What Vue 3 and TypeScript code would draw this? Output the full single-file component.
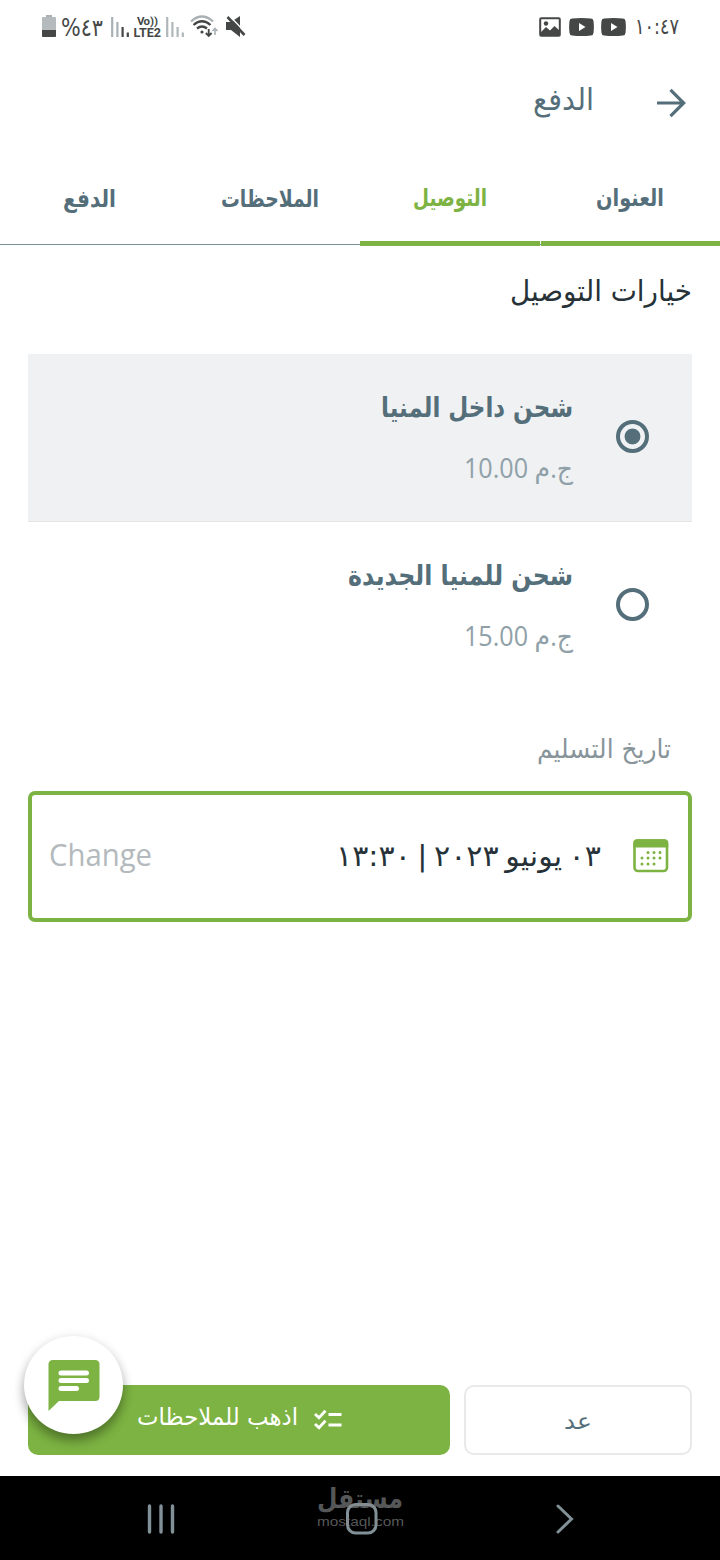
<script setup lang="ts">
import { h, ref } from 'vue'

interface FitProps {
  text: string
  w: number
  cap: number
  size: number
  ltr?: boolean
}

// A text run whose box spans exactly from the top of its letters to the baseline.
const FitText = (p: FitProps) =>
  h('svg', { class: 'fit', width: p.w, height: p.cap, direction: p.ltr ? 'ltr' : 'rtl' }, [
    h(
      'text',
      {
        x: p.ltr ? 0 : p.w,
        y: p.cap,
        'font-size': p.size,
        textLength: p.w,
        lengthAdjust: 'spacingAndGlyphs',
      },
      p.text,
    ),
  ])
FitText.props = { text: String, w: Number, cap: Number, size: Number, ltr: Boolean }

const tabs = [
  { text: 'العنوان', w: 68, state: 'done' },
  { text: 'التوصيل', w: 74, state: 'done current' },
  { text: 'الملاحظات', w: 98, state: 'low' },
  { text: 'الدفع', w: 53, state: 'low' },
]

const options = [
  { name: 'شحن داخل المنيا', w: 192, price: 'ج.م 10.00' },
  { name: 'شحن للمنيا الجديدة', w: 225, price: 'ج.م 15.00' },
]
const selected = ref(0)
</script>

<template>
  <div class="screen" dir="rtl">
    <div class="status" dir="ltr">
      <svg width="14" height="22" viewBox="42 15 14 22">
        <path d="M46 15h6v3h-6z" fill="#abb0b1" />
        <rect x="42" y="17" width="14" height="20" rx="1" fill="#b5babc" />
        <path d="M42 30h14v6a1 1 0 0 1-1 1H43a1 1 0 0 1-1-1z" fill="#454747" />
      </svg>
      <FitText class="pct" text="%٤٣" :w="42" :cap="22" :size="24" ltr />
      <svg class="sig" width="18" height="22" viewBox="111 16 18 22" stroke-width="2.2">
        <path d="M112.2 17v20M117.4 22v15" stroke="#a9b1b4" />
        <path d="M122.6 27v10M127.8 32.500v4.500" stroke="#454747" />
      </svg>
      <svg class="volte" width="28" height="22" viewBox="134 16 28 22" font-family="Roboto" font-weight="700" fill="#454747">
        <text x="137" y="25" font-size="11.500" textLength="13">Vo</text>
        <text x="150" y="25" font-size="11.500" textLength="8">))</text>
        <text x="133.500" y="37" font-size="12.500" textLength="27.500" lengthAdjust="spacingAndGlyphs">LTE2</text>
      </svg>
      <svg class="sig2" width="18" height="22" viewBox="166 16 18 22" stroke-width="2.2" stroke="#b0b7ba">
        <path d="M167.200 17v20M172.400 22v15M177.600 27v10M182.800 32.500v4.500" />
      </svg>
      <svg class="wifi" width="28" height="23" viewBox="190 15 28 23" fill="none" stroke="#454747" stroke-width="2.300">
        <path d="M191 21.500Q202 11.500 213 21.500" stroke="#a9b1b4" />
        <path d="M193.500 25Q202 17.500 210.500 25M197 28.500Q202 24.500 207 28.500" />
        <circle cx="202" cy="32" r="1.600" fill="#454747" stroke="none" />
        <path d="M208.700 29v7M205.800 33l2.900 3 2.900-3" stroke-width="1.800" />
        <path d="M215 35v-6.500M212.500 31l2.500-2.600 2.500 2.600" stroke="#a9b1b4" stroke-width="1.600" />
      </svg>
      <svg class="mute" width="21" height="23" viewBox="225 15 21 23">
        <path d="M226 22h5l9-6v21l-9-7h-5z" fill="#454747" />
        <path d="M229 15.500L246 33" stroke="#fff" stroke-width="1.500" />
        <path d="M227.500 17L244.500 35" stroke="#454747" stroke-width="2.600" />
      </svg>
      <svg class="pic" width="22" height="20" viewBox="539 17 22 20">
        <rect x="540.200" y="18.200" width="19.600" height="17.600" rx="1" fill="none" stroke="#454747" stroke-width="2" />
        <path d="M541 32l5-5 4 3.500 4.500-4.500 5 4.500v5h-18.500z" fill="#454747" />
        <circle cx="546" cy="23.500" r="2.200" fill="#454747" />
      </svg>
      <svg v-for="n in 2" :key="n" class="tube" width="25" height="18" viewBox="0 0 25 18">
        <path d="M3 .6Q12.500-.4 22 .6 24.400.8 24.600 3.500 25.200 9 24.600 14.500 24.400 17.200 22 17.400 12.500 18.400 3 17.400.6 17.200.4 14.500-.2 9 .4 3.500.6.800 3 .6z" fill="#454747" />
        <path d="M10 5l6.500 4-6.500 4z" fill="#fff" />
      </svg>
      <FitText class="clock" text="١٠:٤٧" :w="44" :cap="21" :size="22" ltr />
    </div>

    <header class="bar">
      <svg width="30" height="30" viewBox="0 0 30 30" fill="none" stroke="#546e7a" stroke-width="3.200">
        <path d="M1 15h26M14.500 1.800L27.700 15 14.500 28.200" />
      </svg>
      <FitText class="heading" text="الدفع" :w="61" :cap="23" :size="30" />
    </header>

    <nav class="tabs">
      <div v-for="t in tabs" :key="t.text" class="tab" :class="t.state">
        <FitText :text="t.text" :w="t.w" :cap="19" :size="24" />
      </div>
    </nav>

    <main class="content">
      <FitText class="title" text="خيارات التوصيل" :w="182" :cap="22" :size="29" />

      <div class="options">
        <div
          v-for="(o, i) in options"
          :key="o.name"
          class="option"
          :class="{ on: selected === i }"
          @click="selected = i"
        >
          <span class="radio"></span>
          <div class="info">
            <FitText class="name" :text="o.name" :w="o.w" :cap="22" :size="28" />
            <FitText class="price" :text="o.price" :w="109" :cap="20" :size="27" />
          </div>
        </div>
      </div>

      <FitText class="label" text="تاريخ التسليم" :w="134" :cap="19" :size="26" />
      <div class="date">
        <svg width="36" height="34" viewBox="0 0 36 34">
          <rect x="1.500" y="1.500" width="32.500" height="30.500" rx="3.500" fill="none" stroke="#7cb342" stroke-width="2.600" />
          <path d="M.3 8.500V4Q.3.300 4 .3h27.500Q35.300.300 35.300 4v4.500z" fill="#7cb342" />
          <path
            d="M15 13.500h.01M21 13.500h.01M27 13.500h.01M9 19h.01M15 19h.01M21 19h.01M27 19h.01M9 25h.01M15 25h.01M21 25h.01"
            stroke="#7cb342"
            stroke-width="3"
            stroke-linecap="round"
          />
        </svg>
        <FitText class="when" text="٠٣ يونيو ٢٠٢٣ | ١٣:٣٠" :w="265" :cap="22" :size="29" />
        <FitText class="change" text="Change" :w="103" :cap="22" :size="31" ltr />
      </div>
    </main>

    <footer class="actions">
      <button class="back"><FitText text="عد" :w="28" :cap="14" :size="22" /></button>
      <button class="next">
        <svg width="28" height="20" viewBox="0 0 28 20" fill="none" stroke="#fff" stroke-width="2.800">
          <path d="M1 5l4 3.800L11.500 1.800M1 15l4 3.800 6.500-7M14.500 5.500h13M14.500 16h13" />
        </svg>
        <FitText class="go" text="اذهب للملاحظات" :w="161" :cap="17" :size="24" />
      </button>
      <div class="fab">
        <svg width="52" height="52" viewBox="0 0 52 52">
          <path d="M5 0h42q4.500 0 4.500 4.500v32q0 4.500-4.500 4.500H11L.5 51V4.500Q.5 0 5 0z" fill="#7cb342" />
          <path d="M13 13h25.500M13 20.500h25.500M13 28.500h15.500" stroke="#fff" stroke-width="5" stroke-linecap="round" />
        </svg>
      </div>
    </footer>

    <div class="system" dir="ltr">
      <svg width="28" height="30" viewBox="0 0 28 30" stroke="#829098" stroke-width="3.400" stroke-linecap="round">
        <path d="M2.500 2v26M14 2v26M25.500 2v26" />
      </svg>
      <div class="home">
        <svg width="32" height="32" viewBox="0 0 32 32">
          <rect x="1.500" y="1.500" width="28.500" height="28.500" rx="8" fill="none" stroke="#829098" stroke-width="3" />
        </svg>
        <div class="mark">
          <FitText class="logo" text="مستقل" :w="86" :cap="19" :size="27" />
          <FitText class="site" text="mostaql.com" :w="87" :cap="18" :size="13.5" ltr />
        </div>
      </div>
      <svg width="18" height="30" viewBox="0 0 18 30" fill="none" stroke="#829098" stroke-width="3" stroke-linecap="round">
        <path d="M2 2l13.500 13L2 28" />
      </svg>
    </div>
  </div>
</template>

<style>
body {
  margin: 0;
  background: #fff;
}
</style>

<style scoped>
.screen {
  width: 720px;
  height: 1560px;
  display: flex;
  flex-direction: column;
  overflow: hidden;
  background: #fff;
  color: #546e7a;
  font-family: 'DejaVu Sans', sans-serif;
}
svg {
  display: block;
  flex: none;
  overflow: visible;
}
.fit {
  fill: currentColor;
}
.status {
  height: 54px;
  box-sizing: border-box;
  padding: 15px 41px 0 42px;
  display: flex;
  align-items: flex-start;
  color: #454747;
}
.pct {
  margin-left: 5px;
  margin-top: -1px;
}
.sig {
  margin-left: 8px;
  margin-top: 1px;
}
.volte {
  margin: 1px 0 0 5px;
}
.sig2 {
  margin: 1px 0 0 4px;
}
.wifi {
  margin-left: 6px;
}
.mute {
  margin-left: 7px;
}
.pic {
  margin: 2px 1px 0 auto;
}
.tube {
  margin: 3px 0 0 7px;
}
.clock {
  margin-left: 9px;
  margin-top: -2px;
}
.bar {
  height: 98px;
  display: flex;
  align-items: flex-start;
  padding-right: 34px;
}
.bar > svg:first-child {
  margin-top: 34px;
}
.bar .heading {
  margin: 33px 62px 0 0;
}
.tabs {
  height: 94px;
  display: flex;
  font-weight: 700;
  background: linear-gradient(#78909c, #78909c) 0 92px / 100% 1px no-repeat;
}
.tab {
  width: 180px;
  box-sizing: border-box;
  padding-top: 35px;
  display: flex;
  justify-content: center;
  align-items: flex-start;
}
.tab.low {
  padding-top: 36px;
  padding-left: 0;
  padding-right: 1px;
}
.done {
  border-bottom: 5px solid #7cb342;
}
.done:first-child {
  width: 179px;
  padding-right: 1px;
}
.current {
  color: #7cb342;
  margin-right: 1px;
}
.content {
  padding: 0 28px;
  flex: 1;
}
.title {
  margin-top: 33px;
  color: #263238;
}
.options {
  margin-top: 53px;
}
.option {
  height: 168px;
  box-sizing: border-box;
  display: flex;
  align-items: flex-start;
  padding-right: 43px;
}
.option.on {
  background: #eff1f3;
  border-bottom: 1px solid #e2e4e5;
}
.radio {
  width: 33px;
  height: 33px;
  box-sizing: border-box;
  border: 4px solid #546e7a;
  border-radius: 50%;
  margin-top: 66px;
}
.on .radio {
  background: radial-gradient(circle, #546e7a 7.500px, transparent 8.300px);
}
.info {
  padding: 41px 43px 0 0;
}
.name {
  font-weight: 700;
}
.price {
  margin-top: 41px;
  color: #90a0a8;
  font-family: 'Open Sans', 'DejaVu Sans', sans-serif;
}
.label {
  margin: 49px 21px 0 0;
  color: #87949a;
}
.date {
  height: 131px;
  box-sizing: border-box;
  margin-top: 33px;
  border: 4px solid #7cb342;
  border-radius: 7px;
  display: flex;
  align-items: flex-start;
  padding: 0 19px;
}
.date > svg:first-child {
  margin-top: 44px;
}
.date .when {
  margin: 49px 32px 0 0;
  color: #263238;
  word-spacing: -3px;
}
.date .change {
  margin: 49px auto 0 -2px;
  color: #b3b9bc;
  font-family: 'Open Sans', sans-serif;
  font-weight: 400;
}
.actions {
  position: relative;
  height: 91px;
  box-sizing: border-box;
  padding: 0 28px 21px;
  display: flex;
  gap: 14px;
}
button {
  font: inherit;
  color: inherit;
  border: 0;
  padding: 0;
  height: 70px;
  border-radius: 10px;
  display: flex;
  align-items: flex-start;
}
.back {
  width: 228px;
  background: #fff;
  border: 2px solid #e9e9e9;
  justify-content: center;
  padding-top: 28px;
}
.next {
  flex: 1;
  background: #7cb342;
  color: #fff;
  padding: 23px 108px 0 0;
}
.next > svg:first-child {
  margin-top: 1px;
}
.next .go {
  margin-right: 16px;
}
.fab {
  position: absolute;
  left: 24px;
  top: -49px;
  width: 99px;
  height: 98px;
  border-radius: 50%;
  background: #fff;
  box-shadow: 0 7px 11px rgba(0, 0, 0, 0.32), 0 1px 12px rgba(0, 0, 0, 0.08);
  display: flex;
  align-items: center;
  justify-content: center;
}
.fab svg {
  margin: 1px 0 0 1px;
}
.system {
  height: 84px;
  box-sizing: border-box;
  background: #000;
  padding: 2px 146px 0 147px;
  display: flex;
  justify-content: space-between;
  align-items: center;
}
.home {
  position: relative;
  left: -4px;
}
.mark {
  position: absolute;
  left: -29px;
  top: -14px;
  color: rgba(135, 138, 140, 0.65);
  font-weight: 700;
}
.site {
  font-family: 'Liberation Sans', sans-serif;
  font-weight: 400;
}
</style>
